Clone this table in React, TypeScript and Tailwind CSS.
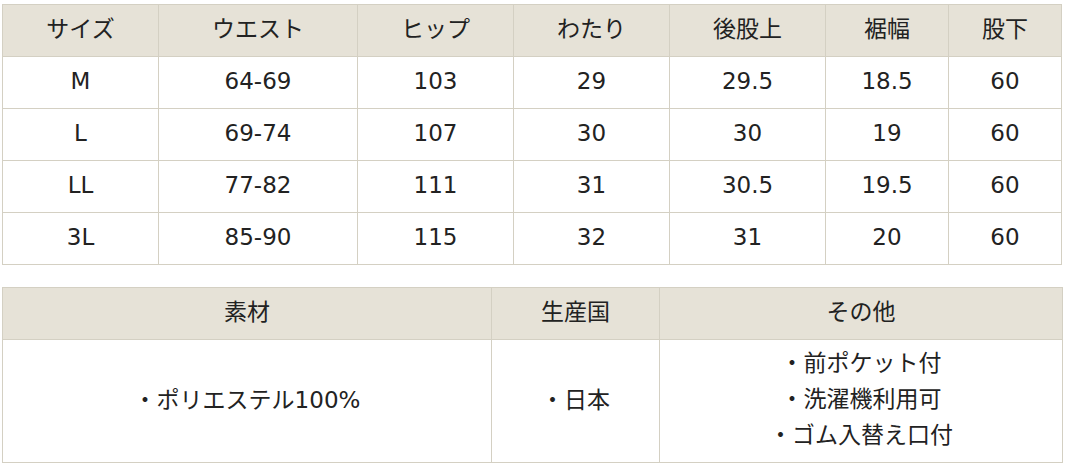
import React from 'react'

const sizes = [
    ['M', '64-69', '103', '29', '29.5', '18.5', '60'],
    ['L', '69-74', '107', '30', '30', '19', '60'],
    ['LL', '77-82', '111', '31', '30.5', '19.5', '60'],
    ['3L', '85-90', '115', '32', '31', '20', '60'],
]

const heads = ['サイズ', 'ウエスト', 'ヒップ', 'わたり', '後股上', '裾幅', '股下']
const widths = [156, 199, 156, 156, 156, 123, 113]

export default function App() {
    return (
        <div className="bg-white w-[1065px] h-[469px] pl-[2px] pt-[4px] text-[#222] text-[23px] font-['DejaVu_Sans','Noto_Sans_CJK_JP',sans-serif]">
            {/* Size table */}
            <table className="table-fixed border-collapse w-[1060px]">
                <colgroup>
                    {widths.map((w, i) => (
                        <col key={i} style={{ width: w }} />
                    ))}
                </colgroup>
                <thead>
                    <tr className="bg-[#e6e2d7] h-[52px]">
                        {heads.map((h) => (
                            <th key={h} className="border border-[#d4d0c3] font-normal text-center p-0 pb-[3px]">
                                {h}
                            </th>
                        ))}
                    </tr>
                </thead>
                <tbody>
                    {sizes.map((row) => (
                        <tr key={row[0]} className="h-[52px]">
                            {row.map((v, i) => (
                                <td key={i} className="border border-[#d4d0c3] text-center p-0 pb-[2px]">
                                    {v}
                                </td>
                            ))}
                        </tr>
                    ))}
                </tbody>
            </table>

            {/* Material table */}
            <table className="table-fixed border-collapse w-[1060px] mt-[22px]">
                <colgroup>
                    <col className="w-[489px]" />
                    <col className="w-[168px]" />
                    <col className="w-[403px]" />
                </colgroup>
                <thead>
                    <tr className="bg-[#e6e2d7] h-[52px]">
                        <th className="border border-[#d4d0c3] font-normal text-center p-0 pb-[3px]">素材</th>
                        <th className="border border-[#d4d0c3] font-normal text-center p-0 pb-[3px]">生産国</th>
                        <th className="border border-[#d4d0c3] font-normal text-center p-0 pb-[3px]">その他</th>
                    </tr>
                </thead>
                <tbody>
                    <tr className="h-[123px]">
                        <td className="border border-[#d4d0c3] text-center p-0 pb-[2px]">・ポリエステル100%</td>
                        <td className="border border-[#d4d0c3] text-center p-0 pb-[2px]">・日本</td>
                        <td className="border border-[#d4d0c3] text-center p-0 pb-[4px] leading-[36px]">
                            <div>・前ポケット付</div>
                            <div>・洗濯機利用可</div>
                            <div>・ゴム入替え口付</div>
                        </td>
                    </tr>
                </tbody>
            </table>
        </div>
    )
}
